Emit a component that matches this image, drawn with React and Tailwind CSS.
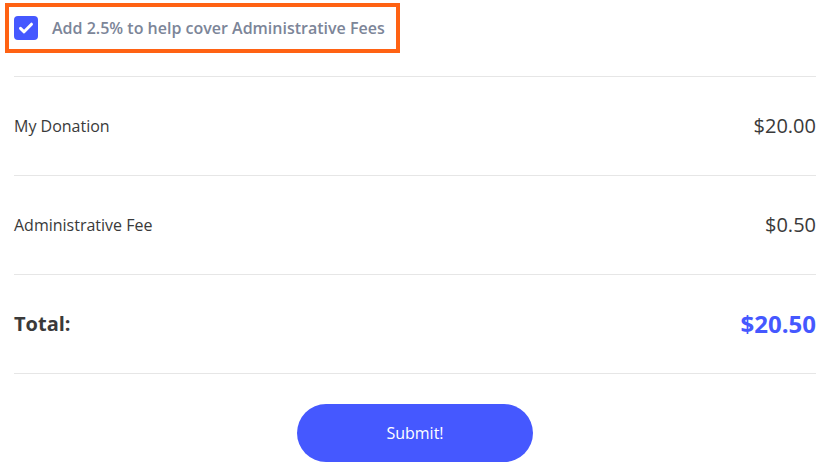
import React, { useState } from 'react';

const rows = [
  { label: 'My Donation', amount: '$20.00' },
  { label: 'Administrative Fee', amount: '$0.50' },
];

const App = () => {
  const [coverFees, setCoverFees] = useState(true);

  return (
    <div className="w-[840px] h-[467px] bg-white font-['Open_Sans',sans-serif] text-[#3a3a3a]">
      <div className="pl-[5px] pt-[3px]">
        <div className="flex items-center w-[395px] h-[50px] border-4 border-[#ff6213] pl-[5px]">
          <button
            type="button"
            onClick={() => setCoverFees(!coverFees)}
            className="flex items-center justify-center w-6 h-6 rounded bg-[#4558ff]"
          >
            {coverFees && (
              <svg width="20" height="20" viewBox="0 0 20 20" fill="none">
                <path d="M4.5 10.3l3.6 3.5 7.4-7.6" stroke="white" strokeWidth="3" strokeLinecap="round" strokeLinejoin="round" />
              </svg>
            )}
          </button>
          <span className="ml-[14px] text-[16px] font-semibold text-[#7c8598]">
            Add 2.5% to help cover Administrative Fees
          </span>
        </div>
      </div>

      <div className="mx-[14px] w-[802px] mt-[23px] border-t border-[#e6e6e6]">
        {rows.map((row) => (
          <div key={row.label} className="flex items-center justify-between h-[99px] border-b border-[#e6e6e6]">
            <span className="text-[16px]">{row.label}</span>
            <span className="text-[20px]">{row.amount}</span>
          </div>
        ))}
        <div className="flex items-center justify-between h-[99px] border-b border-[#e6e6e6]">
          <span className="text-[20px] font-bold">Total:</span>
          <span className="text-[24px] font-bold text-[#4558ff]">$20.50</span>
        </div>

        <div className="flex justify-center mt-[30px]">
          <button
            type="button"
            className="w-[236px] h-[58px] rounded-full bg-[#4558ff] text-white text-[16px]"
          >
            Submit!
          </button>
        </div>
      </div>
    </div>
  );
};

export default App;
